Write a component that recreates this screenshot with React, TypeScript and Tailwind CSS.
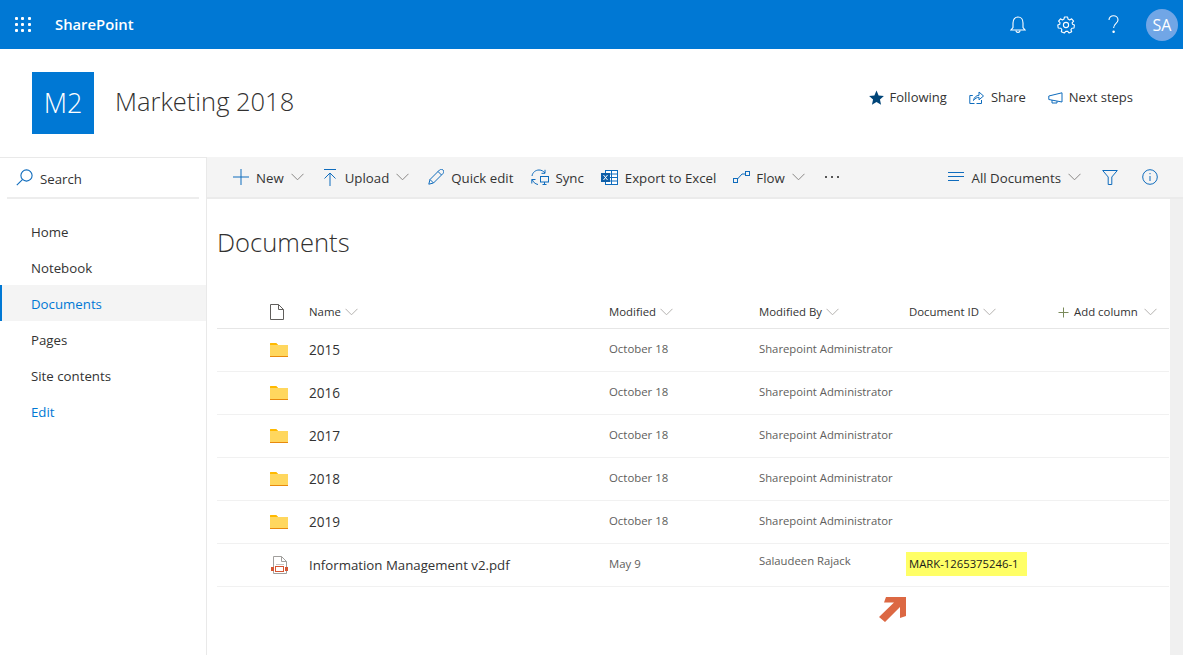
import React from "react";

const Chevron = ({ c = "#8a8886", w = 13 }: { c?: string; w?: number }) => (
  <svg width={w} height="8" viewBox="0 0 13 8" fill="none" stroke={c} strokeWidth="1"><path d="M0.5 0.8 L6.5 6.8 L12.5 0.8" /></svg>
);

const Cmd = ({ icon, label, chevron, cls }: { icon: React.ReactNode; label: string; chevron?: boolean; cls: string }) => (
  <div className={`flex items-center ${cls}`}>
    <div className="w-[18px] h-[18px] flex items-center justify-center shrink-0">{icon}</div>
    <span className="ml-[6px] mt-[2px] text-[13.25px] leading-[20px] text-[#333333] whitespace-nowrap">{label}</span>
    {chevron && <span className="ml-[7px] flex"><Chevron /></span>}
  </div>
);

const B = "#0f6cbd";

const Folder = () => (
  <svg width="18" height="14" viewBox="0 0 18 14">
    <path d="M0 1 Q0 0 1 0 H6 L8 2 V14 H0 Z" fill="#ffb900" />
    <rect x="0" y="2" width="18" height="12" fill="#ffd75e" />
    <path d="M0 1 Q0 0 1 0 H6 L8 2 H0 Z" fill="#ffb900" />
    <rect x="0" y="13" width="18" height="1" fill="#e8890c" />
  </svg>
);

const Pdf = () => (
  <svg width="17" height="18" viewBox="0 0 17 18" fill="none">
    <path d="M2.5 0.5 H10.5 L15.5 5.5 V17.5 H2.5 Z" fill="#fff" stroke="#a19f9d" />
    <path d="M10.5 0.5 V5.5 H15.5" stroke="#a19f9d" />
    <path d="M5 8.5 H13" stroke="#c8c6c4" />
    <rect x="4.5" y="10.5" width="8" height="5" fill="#fff" stroke="#d65532" />
    <rect x="0" y="11" width="3" height="4" fill="#d65532" />
    <rect x="14" y="11" width="3" height="4" fill="#d65532" />
  </svg>
);

const Head = ({ label, w }: { label: string; w: string }) => (
  <div className={`${w} flex items-center gap-[4px]`}>
    <span className="text-[11.4px] leading-[16px] text-[#333333] whitespace-nowrap">{label}</span>
    <Chevron c="#b4b2b0" />
  </div>
);

const rows = ["2015", "2016", "2017", "2018", "2019"];

const navItem = "h-[36px] pl-[31px] pt-[4px] flex items-center";

export default function App() {
  return (
    <div className="w-[1183px] h-[655px] overflow-hidden bg-white flex flex-col font-['Open_Sans','Noto_Sans',sans-serif] text-[#333333]">
      <header className="h-[49px] shrink-0 bg-[#0078d4] flex items-center text-white">
        <div className="ml-[15px] w-[16px] h-[16px] grid grid-cols-3 gap-[3px]">
          {Array.from({ length: 9 }).map((_, i) => (
            <span key={i} className="w-[3px] h-[3px] bg-white rounded-[1px] block" />
          ))}
        </div>
        <span className="ml-[24px] mb-[2px] text-[14.8px] font-semibold leading-[20px]">SharePoint</span>
        <div className="ml-auto flex items-center">
          <svg width="16" height="18" viewBox="0 0 16 18" fill="none" stroke="#fff" strokeWidth="1.1">
            <path d="M1 14 H15 L13 11.5 V7 C13 3.5 11 1 8 1 C5 1 3 3.5 3 7 V11.5 Z" />
            <path d="M6 14.5 C6 17 10 17 10 14.5" />
          </svg>
          <svg className="ml-[31px]" width="18" height="18" viewBox="0 0 18 18" fill="none" stroke="#fff" strokeWidth="1.1">
            <circle cx="9" cy="9" r="2.6" />
            <path d="M7.4 1 H10.6 L11 3.1 L12.7 3.9 L14.6 2.8 L16.6 5.2 L15.1 6.8 L15.5 8.2 L17.4 9 L17 12 L14.9 12.2 L13.9 13.8 L14.7 15.7 L12 17 L10.8 15.4 H8.8 L7.3 17 L4.3 15.7 L4.9 13.7 L3.9 12.3 L1.2 12 L0.8 9 L2.8 8.2 L3 6.6 L1.6 5.2 L3.5 2.8 L5.4 3.9 L7 3.1 Z" strokeLinejoin="round" />
          </svg>
          <svg className="ml-[33px]" width="11" height="19" viewBox="0 0 11 19" fill="none" stroke="#fff" strokeWidth="1.1">
            <path d="M1 5 C1 2.4 3 0.8 5.5 0.8 C8 0.8 10 2.6 10 5 C10 8.4 5.6 8.4 5.6 13" />
            <circle cx="5.6" cy="16.8" r="0.7" fill="#fff" />
          </svg>
          <div className="ml-[27px] mr-[5px] w-[32px] h-[32px] rounded-full bg-[#71a6e6] flex items-center justify-center text-[16px] leading-none text-white">SA</div>
        </div>
      </header>

      <div className="h-[108px] shrink-0 flex items-center">
        <div className="ml-[32px] w-[62px] h-[62px] bg-[#0078d4] flex items-center justify-center text-white text-[27px] font-light">M2</div>
        <h1 className="ml-[21px] mb-[4px] text-[25.5px] font-light leading-[36px] text-[#323130]">Marketing 2018</h1>
        <div className="ml-auto mr-[50px] mb-[11px] flex items-center text-[13px] text-[#333333]">
          <svg width="15" height="15" viewBox="0 0 24 24" fill="#004578"><path d="M12 0.8 L15.4 8.6 L23.8 9.4 L17.5 15 L19.3 23.4 L12 19 L4.7 23.4 L6.5 15 L0.2 9.4 L8.6 8.6 Z" /></svg>
          <span className="ml-[6px]">Following</span>
          <svg className="ml-[22px]" width="15" height="14" viewBox="0 0 15 14" fill="none" stroke={B}><path d="M5.5 12.5 H0.8 V4.5 H3.8 M12.5 9 V12.5 H7.5" /><path d="M4.5 9.5 C5 6.5 7 4.5 10 4.3 V1 L14.5 5 L10 8.8 V6.3 C8 6.3 6 7.5 4.5 9.5 Z" /></svg>
          <span className="ml-[7px]">Share</span>
          <svg className="ml-[22px]" width="15" height="12" viewBox="0 0 15 12" fill="none" stroke={B}><path d="M0.8 4 L14 0.8 V10 L0.8 7.5 Z" /><path d="M4 8 V11 H9 V9.2" /></svg>
          <span className="ml-[6px]">Next steps</span>
        </div>
      </div>

      <div className="flex-1 flex min-h-0">
        <aside className="w-[207px] shrink-0 border-r border-[#e9e9e9] border-t">
          <div className="mx-[7px] h-[41px] border-b-2 border-[#ededed] flex items-center pl-[9px]">
            <svg width="17" height="17" viewBox="0 0 17 17" fill="none" stroke={B} strokeWidth="1.1"><circle cx="10.5" cy="6.5" r="5.6" /><path d="M6.4 10.6 L0.8 16.2" /></svg>
            <span className="ml-[7px] mt-[4px] text-[13.25px] text-[#333333]">Search</span>
          </div>
          <nav className="pt-[14px] text-[13.25px]">
            <div className={navItem}>Home</div>
            <div className={navItem}>Notebook</div>
            <div className="h-[36px] pl-[29px] pt-[4px] flex items-center bg-[#f4f4f4] border-l-2 border-[#0078d4] text-[#0078d4]">Documents</div>
            <div className={navItem}>Pages</div>
            <div className={navItem}>Site contents</div>
            <div className={`${navItem} text-[#0078d4]`}>Edit</div>
          </nav>
        </aside>

        <div className="flex-1 flex flex-col min-w-0">
          <div className="h-[42px] shrink-0 bg-[#f4f4f4] border-b-2 border-[#ebebeb] flex items-center relative">
            <Cmd cls="ml-[25px]" label="New" chevron icon={<svg width="16" height="16" viewBox="0 0 16 16" stroke={B}><path d="M8 0 V16 M0 8 H16" /></svg>} />
            <Cmd cls="ml-[17px]" label="Upload" chevron icon={<svg width="14" height="17" viewBox="0 0 14 17" fill="none" stroke={B}><path d="M1 0.5 H13 M7 4 V17 M1.5 9.5 L7 4 L12.5 9.5" /></svg>} />
            <Cmd cls="ml-[18px]" label="Quick edit" icon={<svg width="16" height="16" viewBox="0 0 16 16" fill="none" stroke={B}><path d="M0.8 15.2 L2 10.5 L11.5 1 C12.5 0 14 0 15 1 C16 2 16 3.5 15 4.5 L5.5 14 Z M10 2.5 L13.5 6 M2 10.5 L5.5 14" /></svg>} />
            <Cmd cls="ml-[18px]" label="Sync" icon={<svg width="18" height="17" viewBox="0 0 18 17" fill="none" stroke={B}><path d="M1 7 C1.5 3.5 4.5 1 8 1 C10.5 1 12.5 2.2 14 4 M14 0.8 V4.3 H10.5" /><path d="M1 10 C2 13 4 15 7 15.5 M0.8 14.5 V10.5 H4.5" /><rect x="9.5" y="7.5" width="8" height="5.5" /><path d="M11.5 15.5 H15.5 M13.5 13 V15.5" /></svg>} />
            <Cmd cls="ml-[17px]" label="Export to Excel" icon={<svg width="17" height="15" viewBox="0 0 17 15"><rect x="4.5" y="0.5" width="12" height="14" fill="#fff" stroke={B} /><path d="M4.5 4 H16.5 M4.5 7.5 H16.5 M4.5 11 H16.5 M10.5 0.5 V14.5" stroke={B} fill="none" /><rect x="0" y="3" width="9" height="9" fill="#0f5fa8" /><path d="M2.5 5 L6.5 10 M6.5 5 L2.5 10" stroke="#fff" /></svg>} />
            <Cmd cls="ml-[16px]" label="Flow" chevron icon={<svg width="17" height="12" viewBox="0 0 17 12" fill="none" stroke={B}><rect x="0.5" y="7.5" width="4" height="4" /><rect x="12.5" y="0.5" width="4" height="4" /><path d="M4.5 8 L9 3 H12.5" /></svg>} />
            <div className="ml-[20px] flex gap-[4px]">
              <span className="w-[2px] h-[2px] bg-[#555] block" /><span className="w-[2px] h-[2px] bg-[#555] block" /><span className="w-[2px] h-[2px] bg-[#555] block" />
            </div>
            <div className="ml-auto flex items-center">
              <svg width="16" height="10" viewBox="0 0 16 10" stroke={B}><path d="M0 0.5 H16 M0 4.5 H16 M0 8.5 H11" /></svg>
              <span className="ml-[8px] mt-[4px] text-[13.25px] whitespace-nowrap">All Documents</span>
              <span className="ml-[7px] flex"><Chevron /></span>
              <svg className="ml-[21px]" width="16" height="15" viewBox="0 0 16 15" fill="none" stroke={B}><path d="M0.7 0.5 H15.3 L9.8 7 V14.5 H6.2 V7 Z" /></svg>
              <svg className="ml-[24px] mr-[25px]" width="16" height="16" viewBox="0 0 16 16" fill="none" stroke={B}><circle cx="8" cy="8" r="7.3" /><path d="M8 7 V12 M8 4 V5.2" /></svg>
            </div>
          </div>

          <div className="flex-1 flex min-h-0">
            <main className="flex-1 pl-[10px] pr-[1px] min-w-0">
              <h2 className="mt-[26px] h-[36px] text-[25.6px] font-light leading-[36px] text-[#323130]">Documents</h2>
              <div className="mt-[35px] h-[33px] border-b border-[#e6e6e6] flex items-center">
                <div className="w-[92px] pl-[53px] flex">
                  <svg width="14" height="16" viewBox="0 0 14 16" fill="none" stroke="#605e5c"><path d="M0.5 0.5 H8.5 L13.5 5.5 V15.5 H0.5 Z M8.5 0.5 V5.5 H13.5" /></svg>
                </div>
                <Head label="Name" w="w-[300px]" />
                <Head label="Modified" w="w-[150px]" />
                <Head label="Modified By" w="w-[150px]" />
                <Head label="Document ID" w="w-[149px]" />
                <div className="flex items-center">
                  <svg width="11" height="11" viewBox="0 0 11 11" stroke="#7a8a5a"><path d="M5.5 0.5 V10.5 M0.5 5.5 H10.5" /></svg>
                  <span className="ml-[5px] text-[11.4px] leading-[16px] text-[#333333] whitespace-nowrap">Add column</span>
                  <span className="ml-[6px] flex"><Chevron c="#b4b2b0" /></span>
                </div>
              </div>
              {rows.map((r) => (
                <div key={r} className="h-[43px] border-b border-[#f1f1f1] flex items-center">
                  <div className="w-[92px] pl-[53px] flex"><Folder /></div>
                  <div className="w-[300px] text-[13.6px] text-[#333333]">{r}</div>
                  <div className="w-[150px] text-[11.4px] text-[#605e5c] -mt-[2px]">October 18</div>
                  <div className="w-[150px] text-[11.3px] text-[#605e5c] -mt-[2px] whitespace-nowrap">Sharepoint Administrator</div>
                </div>
              ))}
              <div className="h-[43px] border-b border-[#f1f1f1] flex items-center">
                <div className="w-[92px] pl-[54px] flex"><Pdf /></div>
                <div className="w-[300px] pt-[2px] text-[13.25px] text-[#333333] whitespace-nowrap">Information Management v2.pdf</div>
                <div className="w-[150px] text-[11.4px] text-[#605e5c] -mt-[2px]">May 9</div>
                <div className="w-[147px] text-[11.3px] text-[#605e5c] -mt-[8px] whitespace-nowrap">Salaudeen Rajack</div>
                <div className="w-[121px] h-[24px] -mt-[2px] bg-[#ffff66] pl-[3px] flex items-center text-[11.3px] text-[#1a1a1a] whitespace-nowrap">MARK-1265375246-1</div>
              </div>
              <div className="mt-[9px] ml-[662px] w-[28px] h-[28px] flex">
                <svg width="27" height="27" viewBox="0 0 27 27"><path d="M7 1 H27 V20 L21 22 V11 L6 26 L0 21 L15 6.5 H5 Z" fill="#dc6843" /></svg>
              </div>
            </main>
            <div className="w-[13px] shrink-0 bg-[#f0f0f0]" />
          </div>
        </div>
      </div>
    </div>
  );
}
